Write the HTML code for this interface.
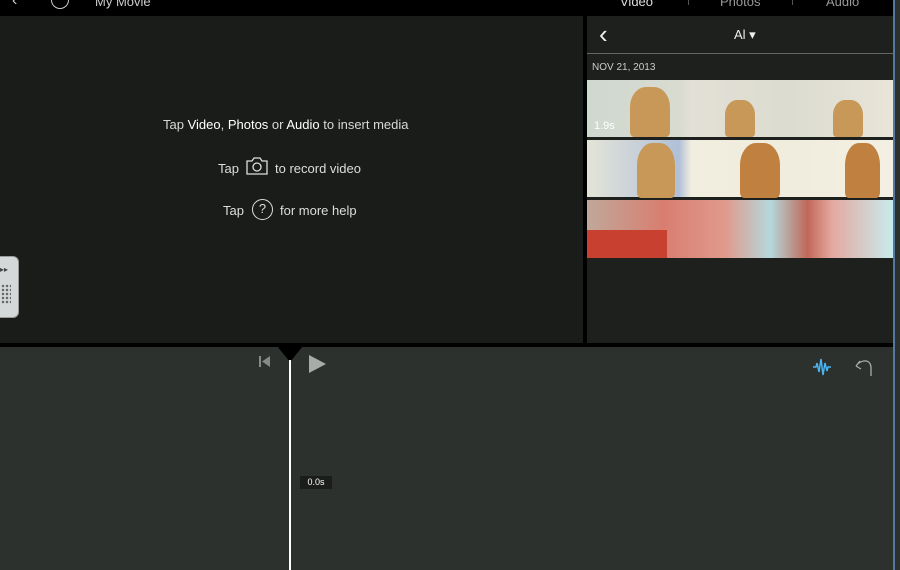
<!DOCTYPE html>
<html><head><style>
body{margin:0;width:900px;height:570px;overflow:hidden;background:#000;font-family:"Liberation Sans",sans-serif;position:relative}
div{position:absolute;box-sizing:border-box}
.t{color:#ddd;font-size:13px;white-space:nowrap}
.th{height:57px}
</style></head><body>
<div style="left:0;top:0;width:900px;height:16px;background:#000"></div>
<div class="t" style="left:12px;top:-8px;font-size:16px;color:#ccc">&#8249;</div>
<div style="left:51px;top:-9px;width:18px;height:18px;border:1.5px solid #ccc;border-radius:50%"></div>
<div class="t" style="left:95px;top:-6px;color:#ccc">My Movie</div>
<div class="t" style="left:620px;top:-6px;color:#ddd">Video</div>
<div style="left:688px;top:0;width:1px;height:5px;background:#555"></div>
<div class="t" style="left:720px;top:-6px;color:#999">Photos</div>
<div style="left:792px;top:0;width:1px;height:5px;background:#555"></div>
<div class="t" style="left:826px;top:-6px;color:#999">Audio</div>

<div style="left:0;top:16px;width:583px;height:327px;background:#1a1c19"></div>
<div class="t" style="left:163px;top:117px;color:#d8d8d8">Tap <span style="color:#fff">Video</span>, <span style="color:#fff">Photos</span> or <span style="color:#fff">Audio</span> to insert media</div>
<div class="t" style="left:218px;top:161px">Tap</div>
<svg style="position:absolute;left:245px;top:157px" width="24" height="20"><path d="M2 4h5l2-3h6l2 3h5v13H2z" fill="none" stroke="#ddd" stroke-width="1.3"/><circle cx="12" cy="10" r="4" fill="none" stroke="#ddd" stroke-width="1.3"/></svg>
<div class="t" style="left:275px;top:161px">to record video</div>
<div class="t" style="left:223px;top:203px">Tap</div>
<div style="left:252px;top:199px;width:21px;height:21px;border:1.5px solid #ddd;border-radius:50%;color:#ddd;font-size:13px;text-align:center;line-height:18px">?</div>
<div class="t" style="left:280px;top:203px">for more help</div>
<div style="left:-10px;top:256px;width:29px;height:62px;background:#d4d8d8;border-radius:6px;border:1px solid #999"></div>
<div style="left:0;top:265px;color:#444;font-size:8px">▸▸</div>
<div style="left:1px;top:284px;width:10px;height:20px;background:radial-gradient(circle,#666 1px,transparent 1.5px) 0 0/4px 4px"></div>

<div style="left:587px;top:16px;width:306px;height:327px;background:#1e201d"></div>
<div style="left:587px;top:53px;width:306px;height:1px;background:#666"></div>
<div class="t" style="left:599px;top:19px;font-size:26px;color:#eee">&#8249;</div>
<div class="t" style="left:734px;top:27px;color:#eee">Al ▾</div>
<div class="t" style="left:592px;top:62px;font-size:10px;color:#ccc">NOV 21, 2013</div>
<div class="th" style="left:587px;top:80px;width:306px;background:linear-gradient(90deg,#cfd8cf,#d9dbd0 30%,#e3e0d6 34%,#dcdcd0 66%,#e8e4d8)"></div>
<div class="th" style="left:587px;top:140px;width:306px;background:linear-gradient(90deg,#e4e4d8,#b0c0d8 30%,#f2eedf 34%,#f0ecde 66%,#f3efe2)"></div>
<div style="left:587px;top:200px;width:306px;height:58px;background:linear-gradient(90deg,#c0a89a,#d87e70 25%,#e09a8c 45%,#b4d8dc 60%,#c06858 72%,#e4a8a0 80%,#c8ecec)"></div>
<div style="left:630px;top:87px;width:40px;height:50px;background:#c89858;border-radius:40% 40% 10% 10%"></div>
<div style="left:725px;top:100px;width:30px;height:37px;background:#c89858;border-radius:40% 40% 10% 10%"></div>
<div style="left:833px;top:100px;width:30px;height:37px;background:#c89858;border-radius:40% 40% 10% 10%"></div>
<div style="left:637px;top:143px;width:38px;height:55px;background:#c89858;border-radius:40% 40% 10% 10%"></div>
<div style="left:740px;top:143px;width:40px;height:55px;background:#c08040;border-radius:40% 40% 10% 10%"></div>
<div style="left:845px;top:143px;width:35px;height:55px;background:#c08040;border-radius:40% 40% 10% 10%"></div>
<div style="left:587px;top:230px;width:80px;height:28px;background:#c84030"></div>
<div class="t" style="left:594px;top:120px;font-size:11px;color:#fff">1.9s</div>
<div style="left:893px;top:0;width:2px;height:570px;background:#5578a0"></div>

<div style="left:0;top:343px;width:893px;height:4px;background:#000"></div>
<div style="left:0;top:347px;width:893px;height:223px;background:#2c312d"></div>
<div style="left:895px;top:0;width:5px;height:570px;background:#2c312d"></div>
<div style="left:259px;top:356px;width:2px;height:11px;background:#888"></div>
<svg style="position:absolute;left:261px;top:356px" width="10" height="12"><path d="M9 0L1 5.5 9 11z" fill="#888"/></svg>
<svg style="position:absolute;left:309px;top:355px" width="20" height="18"><path d="M0 0L17 9 0 18z" fill="#a8aca8"/></svg>
<svg style="position:absolute;left:277px;top:346px" width="26" height="16"><path d="M0 0H26L13 16z" fill="#000"/></svg>
<div style="left:289px;top:360px;width:2px;height:210px;background:#fff"></div>
<div style="left:300px;top:476px;width:32px;height:13px;background:#1a1d1a;color:#fff;font-size:9px;text-align:center;line-height:13px">0.0s</div>
<svg style="position:absolute;left:812px;top:357px" width="20" height="20"><path d="M1 10h3l1-4 2 9 2-13 2 16 2-12 2 8 1-4h3" fill="none" stroke="#4ab4f0" stroke-width="1.5"/></svg>
<svg style="position:absolute;left:852px;top:357px" width="22" height="20"><path d="M4 9L8 4 M4 9L9 12 M4 9C8 3 18 1 19 10V19" fill="none" stroke="#aaa" stroke-width="1.3"/></svg>
</body></html>
